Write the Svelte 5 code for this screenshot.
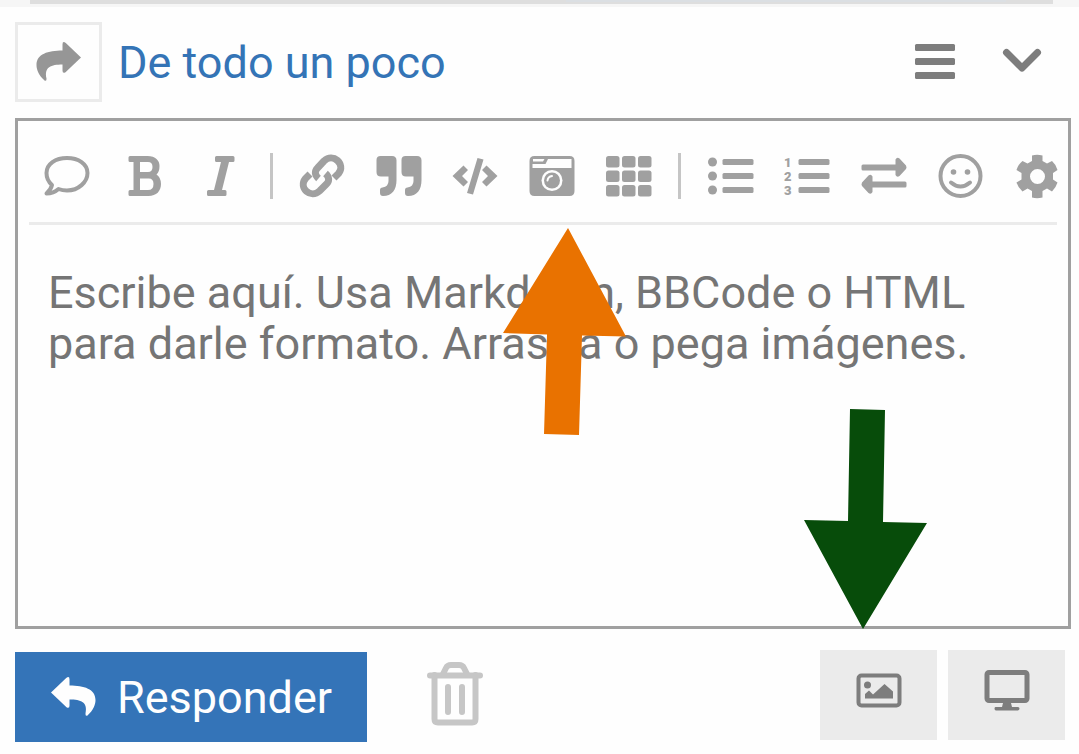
<script lang="ts">
type Tool = { name: string; label: string } | null

// null is a divider
const tools: Tool[] = [
  { name: 'comment', label: 'Comentario' },
  { name: 'bold', label: 'Negrita' },
  { name: 'italic', label: 'Cursiva' },
  null,
  { name: 'link', label: 'Enlace' },
  { name: 'quote', label: 'Cita' },
  { name: 'code', label: 'Código' },
  { name: 'camera', label: 'Imagen' },
  { name: 'table', label: 'Tabla' },
  null,
  { name: 'list', label: 'Lista' },
  { name: 'list-ol', label: 'Lista numerada' },
  { name: 'exchange', label: 'Dirección del texto' },
  { name: 'smile', label: 'Emoji' },
  { name: 'gear', label: 'Opciones' },
]

let body = $state('')
</script>

{#snippet icon(name: string)}
  <svg class="icon" viewBox="0 0 46 46" aria-hidden="true">
    {#if name === 'share'}
      <path d="M45 18.500 29.500 33.200Q26.500 35 26.500 31.500V25.500C15 25.500 8 28 10.500 39.500Q10.800 42.500 8.500 41.500C3 36.500.5 31 .5 26C.5 15 12 11.500 26.500 11.500V5.500Q26.500 1.500 29.800 4Z" />
    {:else if name === 'comment'}
      <path class="line" d="M23 5C34.500 5 43.500 11 43.500 20S34.500 37.500 23 37.500Q18.500 37.500 14.500 36Q9.500 40.500 2.500 40.500Q7 36.500 8 32C4.500 29 2.500 25 2.500 20C2.500 11 11.500 5 23 5Z" />
    {:else if name === 'bold'}
      <path fill-rule="evenodd" d="M9 3H26.500C34.500 3 38.500 7.500 38.500 13Q38.500 19 35.500 21.500Q40 24.500 40 31C40 38 35.500 43 27.500 43H9Q7.500 43 7.500 41.500V38.500Q7.500 37 9 37H12.500V9H9Q7.500 9 7.500 7.500V4.500Q7.500 3 9 3ZM19 9V19H27Q31.500 19 31.500 14T27 9ZM19 25.500V37H27Q32.500 37 32.500 31T27 25.500Z" />
    {:else if name === 'italic'}
      <path d="M19.500 3H36Q37.500 3 37.500 4.500V7.500Q37.500 9 36 9H32L25 37H28Q29.500 37 29.500 38.500V41.500Q29.500 43 28 43H11.500Q10 43 10 41.500V38.500Q10 37 11.500 37H17L24 9H19.500Q18 9 18 7.500V4.500Q18 3 19.500 3Z" />
    {:else if name === 'link'}
      <g class="line chain">
        <path d="M26.500 20.500C30.500 24 30.500 28 27.500 31L20.500 38C12 46-1 35 6.500 25.500L11 21" />
        <path d="M19.500 25.500C15.500 22 15.500 18 18.500 15L25 8C34-.5 47 11 39.500 20.500L35 25" />
      </g>
    {:else if name === 'quote'}
      <path d="M4.500 3H16Q20.500 3 20.500 7.500V27C20.500 37 16 43 7 43Q4 43 4 40V37Q4 34.500 6.500 34.500Q12.500 33.500 12.500 28V23.500H5Q.5 23.500 .5 19V7Q.5 3 4.500 3Z" />
      <path d="M29.500 3H41Q45.500 3 45.500 7.500V27C45.500 37 41 43 32 43Q29 43 29 40V37Q29 34.500 31.500 34.500Q37.500 33.500 37.500 28V23.500H30Q25.500 23.500 25.500 19V7Q25.500 3 29.500 3Z" />
    {:else if name === 'code'}
      <path d="M11.500 12.500 16 17 10 23 16 29 11.500 33.500.5 23ZM34.500 12.500 30 17 36 23 30 29 34.500 33.500 45.500 23ZM25.500 5 31.500 6.500 21 41.500 15 40Z" />
    {:else if name === 'camera'}
      <path fill-rule="evenodd" d="M5.500 3H40.500Q45.500 3 45.500 8V38Q45.500 43 40.500 43H5.500Q.5 43 .5 38V8Q.5 3 5.500 3ZM3.500 11V15H42.500V6H19L16.500 11ZM4 6V8.500H14L15.500 6Z" />
      <circle class="hole" cx="23" cy="27.500" r="10.500" />
      <circle cx="23" cy="27.500" r="8" />
      <path class="glint" d="M18.500 27.500Q19 23.500 23 23" />
    {:else if name === 'table'}
      {#each [3, 17.5, 32] as y}
        {#each [0, 16, 32] as x}
          <rect {x} {y} width="13.500" height="11.500" rx="2.500" />
        {/each}
      {/each}
    {:else if name === 'list'}
      {#each [9, 23, 37] as y}
        <circle cx="4.500" cy={y} r="4.500" />
        <rect x="14.500" y={y - 3} width="31" height="6" rx="1.500" />
      {/each}
    {:else if name === 'list-ol'}
      {#each [9, 23, 37] as y, i}
        <text x="0" y={y + 5}>{i + 1}</text>
        <rect x="14.500" y={y - 3} width="31" height="6" rx="1.500" />
      {/each}
    {:else if name === 'exchange'}
      <path d="M2 11.500H34.500V6.500Q36 3.500 38.500 5.500L45 12.500Q46 14.500 45 16L38.500 23Q36 25 34.500 22V17.500H2Q.5 17.500 .5 16V13Q.5 11.500 2 11.500ZM44 28.500H11.500V23.500Q10 20.500 7.500 22.500L1 29.500Q0 31.500 1 33L7.500 40Q10 42 11.500 39V34.500H44Q45.500 34.500 45.500 33V30Q45.500 28.500 44 28.500Z" />
    {:else if name === 'smile'}
      <circle class="line" cx="23.500" cy="23" r="20" />
      <circle cx="16.500" cy="19" r="2.800" /><circle cx="30.500" cy="19" r="2.800" />
      <path class="line" d="M14 29.500Q23.500 37.500 33 29.500" />
    {:else if name === 'gear'}
      <path fill-rule="evenodd" d="M18 2.500Q23 1 28.500 2.500V8L33 10.500 38 8Q42 11.500 43.500 17L39 20V26.500L43.500 29.500Q42 34.500 38 38.500L33 35.500 28.500 38V44.500Q23 46 18 44.500V38L13.500 35.500 8.500 38.500Q4 34.500 2.500 29.500L7.500 26.500V20L2.500 17Q4 11.500 8.500 8L13.500 10.500 18 8ZM23.500 16A7.500 7.500 0 1 0 23.500 31A7.500 7.500 0 1 0 23.500 16Z" />
    {:else if name === 'bars'}
      {#each [6, 20, 34] as y}
        <rect x="3" {y} width="40" height="7" rx="1.500" />
      {/each}
    {:else if name === 'chevron'}
      <path class="chevron" d="M7.500 14.500 23 30 38.500 14.500" />
    {:else if name === 'picture'}
      <rect class="line" x="2.500" y="8.500" width="41" height="30" rx="3" />
      <circle cx="11.500" cy="18" r="3.500" />
      <path d="M9 31.500V27L13 23.500 17 27.500 28.500 17 37 24.500V31.500Z" />
    {:else if name === 'desktop'}
      <rect class="line thick" x="3" y="5.500" width="40" height="28" rx="2" />
      <path d="M19.500 34H26.500L28 40H34Q35.500 40 35.500 41.500T34 43.500H12Q10.500 43.500 10.500 41.500T12 40H18Z" />
    {/if}
  </svg>
{/snippet}

<div class="progress"><span class="progress__bar"></span></div>

<main class="composer">
  <header class="header">
    <button class="header__share" aria-label="Acciones">{@render icon('share')}</button>
    <a class="header__title" href="#tema">De todo un poco</a>
    <button class="header__btn" aria-label="Menú">{@render icon('bars')}</button>
    <button class="header__btn" aria-label="Minimizar">{@render icon('chevron')}</button>
  </header>

  <section class="editor">
    <div class="toolbar">
      <div class="toolbar__items">
        {#each tools as tool}
          {#if tool}
            <button class="toolbar__btn" aria-label={tool.label}>{@render icon(tool.name)}</button>
          {:else}
            <span class="toolbar__divider"></span>
          {/if}
        {/each}
      </div>
    </div>
    <textarea
      class="editor__text"
      aria-label="Mensaje"
      placeholder="Escribe aquí. Usa Markdown, BBCode o HTML para darle formato. Arrastra o pega imágenes."
      bind:value={body}
    ></textarea>

    <svg class="arrow arrow--up" viewBox="0 0 123 207" aria-hidden="true">
      <path d="M65 0 123 108.500 79 107.500 76 207 41 206 44 106.500 0 105Z" />
    </svg>
    <svg class="arrow arrow--down" viewBox="0 0 123 220" aria-hidden="true">
      <path d="M46 0 81 1 79 113 123 114 59 220 0 111 44 112Z" />
    </svg>
  </section>

  <footer class="footer">
    <button class="footer__reply">
      <svg class="icon" viewBox="0 0 46 46" aria-hidden="true">
        <path d="M1 18.500 16.500 33.200Q19.500 35 19.500 31.500V25.500C31 25.500 38 28 35.500 39.500Q35.200 42.500 37.500 41.500C43 36.500 45.500 31 45.500 26C45.500 15 34 11.500 19.500 11.500V5.500Q19.500 1.500 16.200 4Z" />
      </svg>
      Responder
    </button>
    <button class="footer__trash" aria-label="Descartar">
      <svg viewBox="0 0 56 64" aria-hidden="true">
        <path class="can" d="M7.500 13V57Q7.500 60.500 11 60.500H45Q48.500 60.500 48.500 57V13M16 12 19 6Q20.500 3 24 3H32Q35.500 3 37 6L40 12" />
        <path class="lid" d="M3 13.500H53M21 25V50M35 25V50" />
      </svg>
    </button>
    <button class="footer__tool" aria-label="Subir imagen">{@render icon('picture')}</button>
    <button class="footer__tool" aria-label="Vista previa">{@render icon('desktop')}</button>
  </footer>
</main>

<style>
  :global(body) {
    margin: 0;
    background: #fefefe;
    font-family: Roboto, sans-serif;
    font-size: 45px;
  }

  button {
    display: flex;
    align-items: center;
    justify-content: center;
    margin: 0;
    padding: 0;
    border: 0;
    background: none;
    font: inherit;
    color: inherit;
    cursor: pointer;
  }

  .icon {
    width: 46px;
    height: 46px;
    flex-shrink: 0;
    overflow: visible;
    fill: currentColor;
  }

  .icon text {
    font-size: 13px;
    font-weight: 900;
  }

  .line {
    fill: none;
    stroke: currentColor;
    stroke-width: 4;
    stroke-linecap: round;
    stroke-linejoin: round;
  }

  .thick {
    stroke-width: 5;
  }

  .chain {
    stroke-width: 7;
    stroke-linecap: butt;
  }

  .hole {
    fill: #fefefe;
  }

  .glint {
    fill: none;
    stroke: #fefefe;
    stroke-width: 2;
    stroke-linecap: round;
  }

  .chevron {
    fill: none;
    stroke: currentColor;
    stroke-width: 7;
    stroke-linecap: round;
    stroke-linejoin: round;
  }

  .progress {
    height: 7px;
    padding: 0 26px 0 30px;
    box-sizing: border-box;
    background: #f6f6f6;
  }

  .progress__bar {
    display: block;
    height: 4px;
    background: linear-gradient(#dbdfe3, #dbdfe3) 92% 0 / 43% 2px no-repeat #dedede;
  }

  .composer {
    padding: 15px 8px 12px 15px;
  }

  .header {
    display: flex;
    align-items: center;
    gap: 16px;
    margin-bottom: 16px;
    padding-right: 14px;
    color: #7d7d7d;
  }

  .header__share {
    width: 87px;
    height: 80px;
    box-sizing: border-box;
    border: 3px solid #ebebeb;
    color: #969696;
  }

  .header__title {
    flex: 1;
    color: #3474b6;
    text-decoration: none;
  }

  .header__btn {
    width: 71px;
    height: 60px;
    padding-bottom: 3px;
  }

  .editor {
    position: relative;
    border: 3px solid #a0a0a0;
  }

  .toolbar {
    margin: 0 11px;
    border-bottom: 3px solid #ebebeb;
  }

  .toolbar__items {
    display: flex;
    align-items: center;
    height: 101px;
    padding-top: 8px;
    box-sizing: border-box;
    margin-right: -18px;
    color: #a0a0a0;
  }

  .toolbar__btn {
    flex: 3 1 0;
    height: 60px;
  }

  .toolbar__divider {
    flex: 1 1 0;
    height: 46px;
    background: linear-gradient(#c5c5c5, #c5c5c5) center / 3px 100% no-repeat;
  }

  .editor__text {
    display: block;
    width: 100%;
    height: 401px;
    box-sizing: border-box;
    padding: 42px 30px;
    border: 0;
    outline: 0;
    resize: none;
    background: none;
    font: inherit;
    line-height: 51px;
    color: #222;
  }

  .editor__text::placeholder {
    color: #757575;
    opacity: 1;
  }

  .arrow {
    position: absolute;
    width: 123px;
    pointer-events: none;
  }

  .arrow--up {
    top: 107px;
    left: 485px;
    fill: #e97200;
  }

  .arrow--down {
    right: 141px;
    bottom: -3px;
    fill: #074c0a;
  }

  .footer {
    display: flex;
    align-items: flex-start;
    gap: 11px;
    padding: 21px 6px 0 0;
  }

  .footer__reply {
    gap: 21px;
    height: 90px;
    margin-top: 2px;
    padding: 0 35px;
    background: #3474b8;
    color: #fefefe;
  }

  .footer__trash {
    width: 56px;
    height: 88px;
    margin: 0 auto 0 49px;
  }

  .footer__trash svg {
    width: 56px;
    fill: none;
    stroke: #c6c6c6;
    stroke-width: 6;
    stroke-linecap: round;
  }

  .footer__tool {
    width: 117px;
    height: 90px;
    padding-bottom: 10px;
    box-sizing: border-box;
    background: #ebebeb;
    color: #7d7d7d;
  }
</style>
